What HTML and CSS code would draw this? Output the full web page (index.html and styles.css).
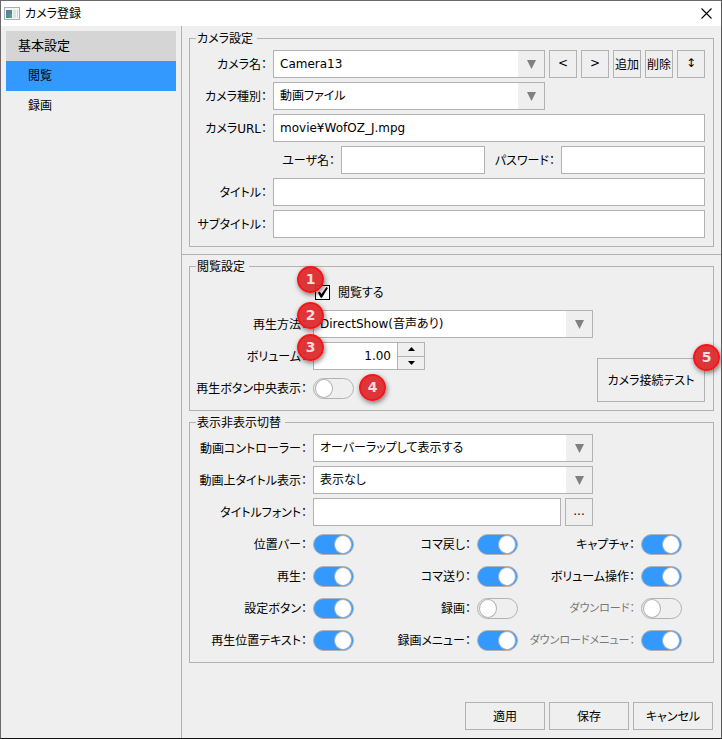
FILE: index.html
```
<!DOCTYPE html>
<html lang="ja">
<head>
    <meta charset="UTF-8">
    <meta name="viewport" content="width=device-width, initial-scale=1.0">
    <title>カメラ登録</title>
    <link rel="stylesheet" href="styles.css">
</head>
<body>
    <header class="titlebar">
        <svg class="app-icon" width="16" height="14" viewBox="0 0 16 14">
            <rect x="0.5" y="0.5" width="15" height="12" fill="#f4f6f7" stroke="#a9afb3"/>
            <rect x="2" y="3" width="6" height="8" fill="#4c8f8a"/>
            <rect x="2" y="3" width="3" height="4" fill="#5b7fae"/>
            <rect x="5" y="7" width="3" height="4" fill="#4fa37a"/>
            <rect x="9" y="3" width="3" height="8" fill="#dde2e5"/>
            <rect x="13" y="3" width="1" height="8" fill="#c3d8cf"/>
        </svg>
        <h1>カメラ登録</h1>
        <button class="close" type="button" aria-label="閉じる">
            <svg width="11" height="11" viewBox="0 0 11 11"><path d="M0.5 0.5L10.5 10.5M10.5 0.5L0.5 10.5" stroke="#000" stroke-width="1.1"/></svg>
        </button>
    </header>
    <div class="window">
        <nav class="sidebar">
            <div class="group">基本設定</div>
            <a class="active" href="#view">閲覧</a>
            <a href="#record">録画</a>
        </nav>
        <form class="main">
            <!-- カメラ設定 -->
            <fieldset class="camera">
                <legend>カメラ設定</legend>
                <div class="row">
                    <label for="name">カメラ名：</label>
                    <div class="line">
                        <span class="select"><select id="name"><option>Camera13</option></select></span>
                        <button class="small" type="button">&lt;</button>
                        <button class="small" type="button">&gt;</button>
                        <button class="small" type="button">追加</button>
                        <button class="small" type="button">削除</button>
                        <button class="small" type="button">↕</button>
                    </div>
                </div>
                <div class="row">
                    <label for="kind">カメラ種別：</label>
                    <div class="line kind">
                        <span class="select"><select id="kind"><option>動画ファイル</option></select></span>
                    </div>
                </div>
                <div class="row">
                    <label for="url">カメラURL：</label>
                    <input type="text" id="url" value="movie¥WofOZ_J.mpg">
                </div>
                <div class="row">
                    <div class="login">
                        <label for="user">ユーザ名：</label>
                        <input type="text" id="user">
                        <label for="pass">パスワード：</label>
                        <input type="password" id="pass">
                    </div>
                </div>
                <div class="row">
                    <label for="title">タイトル：</label>
                    <input type="text" id="title">
                </div>
                <div class="row">
                    <label for="subtitle">サブタイトル：</label>
                    <input type="text" id="subtitle">
                </div>
            </fieldset>
            <hr>
            <!-- 閲覧設定 -->
            <fieldset class="view" id="view">
                <legend>閲覧設定</legend>
                <div class="split">
                    <div class="rows">
                        <div class="row">
                            <div class="line field check">
                                <input type="checkbox" id="watch" checked>
                                <label for="watch">閲覧する</label>
                                <span class="badge b1">1</span>
                            </div>
                        </div>
                        <div class="row">
                            <label for="method">再生方法：</label>
                            <div class="line field">
                                <span class="select"><select id="method"><option>DirectShow(音声あり)</option></select></span>
                                <span class="badge b2">2</span>
                            </div>
                        </div>
                        <div class="row">
                            <label for="volume">ボリューム：</label>
                            <div class="line field">
                                <div class="spinner">
                                    <input type="text" id="volume" value="1.00">
                                    <div class="steps">
                                        <button type="button" aria-label="上げる"><svg width="7" height="4"><path d="M0 4L3.5 0L7 4Z"/></svg></button>
                                        <button type="button" aria-label="下げる"><svg width="7" height="4"><path d="M0 0L3.5 4L7 0Z"/></svg></button>
                                    </div>
                                </div>
                                <span class="badge b2">3</span>
                            </div>
                        </div>
                        <div class="row">
                            <label for="center">再生ボタン中央表示：</label>
                            <div class="line field">
                                <input type="checkbox" class="toggle" id="center">
                                <span class="badge b4">4</span>
                            </div>
                        </div>
                    </div>
                    <div class="test">
                        <button type="button">カメラ接続テスト</button>
                        <span class="badge b5">5</span>
                    </div>
                </div>
            </fieldset>
            <!-- 表示非表示切替 -->
            <fieldset class="view">
                <legend>表示非表示切替</legend>
                <div class="rows display">
                    <div class="row">
                        <label for="controller">動画コントローラー：</label>
                        <span class="select"><select id="controller"><option>オーバーラップして表示する</option></select></span>
                    </div>
                    <div class="row">
                        <label for="overlay">動画上タイトル表示：</label>
                        <span class="select"><select id="overlay"><option>表示なし</option></select></span>
                    </div>
                    <div class="row">
                        <label for="font">タイトルフォント：</label>
                        <div class="line">
                            <input type="text" id="font">
                            <button class="small" type="button">...</button>
                        </div>
                    </div>
                </div>
                <div class="toggles">
                    <div class="item"><label for="t1">位置バー：</label><input type="checkbox" class="toggle" id="t1" checked></div>
                    <div class="item"><label for="t2">コマ戻し：</label><input type="checkbox" class="toggle" id="t2" checked></div>
                    <div class="item"><label for="t3">キャプチャ：</label><input type="checkbox" class="toggle" id="t3" checked></div>
                    <div class="item"><label for="t4">再生：</label><input type="checkbox" class="toggle" id="t4" checked></div>
                    <div class="item"><label for="t5">コマ送り：</label><input type="checkbox" class="toggle" id="t5" checked></div>
                    <div class="item"><label for="t6">ボリューム操作：</label><input type="checkbox" class="toggle" id="t6" checked></div>
                    <div class="item"><label for="t7">設定ボタン：</label><input type="checkbox" class="toggle" id="t7" checked></div>
                    <div class="item"><label for="t8">録画：</label><input type="checkbox" class="toggle" id="t8"></div>
                    <div class="item off"><label for="t9">ダウンロード：</label><input type="checkbox" class="toggle" id="t9" disabled></div>
                    <div class="item"><label for="t10">再生位置テキスト：</label><input type="checkbox" class="toggle" id="t10" checked></div>
                    <div class="item"><label for="t11">録画メニュー：</label><input type="checkbox" class="toggle" id="t11" checked></div>
                    <div class="item off"><label for="t12">ダウンロードメニュー：</label><input type="checkbox" class="toggle" id="t12" checked disabled></div>
                </div>
            </fieldset>
            <div class="actions">
                <button type="button">適用</button>
                <button type="submit">保存</button>
                <button type="button">キャンセル</button>
            </div>
        </form>
    </div>
</body>
</html>
```
FILE: styles.css
```
*, *::before, *::after {
    box-sizing: border-box;
}
body {
    margin: 0;
    min-height: 100vh;
    display: flex;
    flex-direction: column;
    border: 1px solid #6b696b;
    border-right-color: #5a5a5a;
    border-bottom-color: #111;
    background: #efefef;
    color: #000;
}
body, input, select, button {
    font-family: "DejaVu Sans", "Noto Sans CJK JP", sans-serif;
    font-size: 12px;
    font-feature-settings: "palt";
}
input, select, button {
    margin: 0;
    color: #000;
    border: 1px solid #b2b2b2;
    border-radius: 0;
}
button {
    height: 28px;
    padding: 0 0 2px;
    background: #efefef;
}
.titlebar {
    display: flex;
    align-items: center;
    height: 25px;
    padding: 0 9px 0 3px;
    background: #fff;
}
.titlebar h1 {
    flex: 1;
    margin: 0 0 0 5px;
    padding-bottom: 2px;
    font-size: 12px;
    font-weight: normal;
}
.close {
    display: flex;
    height: 11px;
    padding: 0;
    border: none;
    background: none;
}
.window {
    flex: 1;
    display: flex;
}

/* サイドバー */
.sidebar {
    width: 181px;
    padding: 5px;
    border-right: 1px solid #b2b2b2;
}
.sidebar .group,
.sidebar a {
    display: block;
    height: 30px;
    line-height: 30px;
}
.sidebar .group {
    padding-left: 12px;
    font-size: 13px;
    background: #d5d5d5;
}
.sidebar a {
    padding-left: 22px;
    color: #000;
    text-decoration: none;
}
.sidebar a.active {
    background: #3399ff;
}

.main {
    flex: 1;
    display: flex;
    flex-direction: column;
    padding-top: 4px;
}
fieldset {
    min-width: 0;
    margin: 0 7px 3px;
    padding: 3px 8px 8px 0;
    border: 1px solid #b2b2b2;
}
legend {
    height: 17px;
    line-height: 18px;
    margin-left: 6px;
    padding: 0 4px 0 1px;
}
hr {
    width: 100%;
    height: 1px;
    margin: 4px 0 3px;
    border: none;
    background: #b2b2b2;
}

/* 入力行 */
.row {
    display: grid;
    grid-template-columns: 117px 1fr;
    column-gap: 6px;
    align-items: center;
    height: 28px;
    margin-bottom: 4px;
}
.row:last-child {
    margin-bottom: 0;
}
.camera .row {
    grid-template-columns: 77px 1fr;
}
label {
    padding-bottom: 2px;
    text-align: right;
    white-space: nowrap;
}
.line {
    display: flex;
    align-items: center;
    gap: 4px;
    height: 28px;
}
.login {
    grid-column: 2;
    display: grid;
    grid-template-columns: 62px 1fr 64px 1fr;
    column-gap: 6px;
    align-items: center;
}
.kind {
    padding-right: 160px;
}
input[type="text"],
input[type="password"] {
    width: 100%;
    min-width: 0;
    height: 28px;
    padding: 0 6px;
    background: #fff;
}
.select {
    position: relative;
    flex: 1;
    display: block;
}
.select select {
    display: block;
    width: 100%;
    height: 28px;
    padding: 0 30px 0 6px;
    appearance: none;
    background: linear-gradient(#efefef, #efefef) right / 26px 100% no-repeat #fff;
}
.select::after {
    content: "";
    position: absolute;
    top: 10px;
    right: 9px;
    width: 9px;
    height: 9px;
    background: #808080;
    clip-path: polygon(0 0, 100% 0, 50% 100%);
    pointer-events: none;
}
.small {
    flex: none;
    width: 28px;
}

/* 閲覧設定 */
.split {
    display: flex;
    align-items: flex-end;
    gap: 4px;
}
.rows {
    flex: 1;
}
.display {
    padding-right: 112px;
    margin-bottom: 4px;
}
.field {
    grid-column: 2;
    position: relative;
}
.check {
    gap: 8px;
    padding-left: 2px;
}
.check input {
    appearance: none;
    width: 15px;
    height: 15px;
    border: 1px solid #000;
    background: #fff;
}
.check input:checked::before {
    content: "";
    display: block;
    width: 13px;
    height: 13px;
    background: #000;
    clip-path: polygon(15% 55%, 28% 46%, 42% 66%, 80% 12%, 92% 20%, 46% 94%, 36% 94%);
}
.spinner {
    display: flex;
    width: 112px;
}
.spinner input[type="text"] {
    flex: 1;
    text-align: right;
}
.steps {
    display: flex;
    flex-direction: column;
    width: 27px;
    border: 1px solid #b2b2b2;
    border-left: none;
}
.steps button {
    flex: 1;
    display: flex;
    align-items: center;
    justify-content: center;
    height: 13px;
    padding: 0;
    border: none;
}
.steps button + button {
    border-top: 1px solid #b2b2b2;
}
.test {
    position: relative;
    width: 108px;
}
.test button {
    width: 100%;
    height: 44px;
}

/* 番号バッジ */
.badge {
    position: absolute;
    width: 27px;
    height: 27px;
    border: 2px solid #f81414;
    border-radius: 50%;
    background: rgba(220, 40, 44, 0.93);
    box-shadow: 1px 2px 5px rgba(0, 0, 0, 0.5);
    color: #fbdcdc;
    font-size: 14px;
    font-weight: bold;
    line-height: 22px;
    text-align: center;
}
.b1 {
    left: -16px;
    top: -12px;
}
.b2 {
    left: -16px;
    top: -8px;
}
.b4 {
    left: 46px;
    top: 0;
}
.b5 {
    right: -15px;
    top: -14px;
}

/* トグルスイッチ */
.toggle {
    appearance: none;
    flex: none;
    width: 41px;
    height: 21px;
    padding: 0 1px;
    border: 1px solid #b2b2b2;
    border-radius: 11px;
    background: #efefef;
}
.toggle::before {
    content: "";
    display: block;
    width: 18px;
    height: 19px;
    border: 1px solid #b2b2b2;
    border-radius: 50%;
    background: #fff;
}
.toggle:checked {
    background: #3399ff;
}
.toggle:checked::before {
    margin-left: auto;
    border-color: #9bb0c8;
}
.toggles {
    display: grid;
    grid-template-columns: repeat(3, 1fr);
    row-gap: 4px;
    margin-right: 23px;
}
.item {
    display: flex;
    align-items: center;
    justify-content: flex-end;
    gap: 6px;
    height: 28px;
}
.off label {
    color: #777;
    font-size: 11px;
}

.actions {
    display: flex;
    justify-content: flex-end;
    gap: 4px;
    margin-top: auto;
    padding: 0 8px 8px;
}
.actions button {
    width: 80px;
}
```
